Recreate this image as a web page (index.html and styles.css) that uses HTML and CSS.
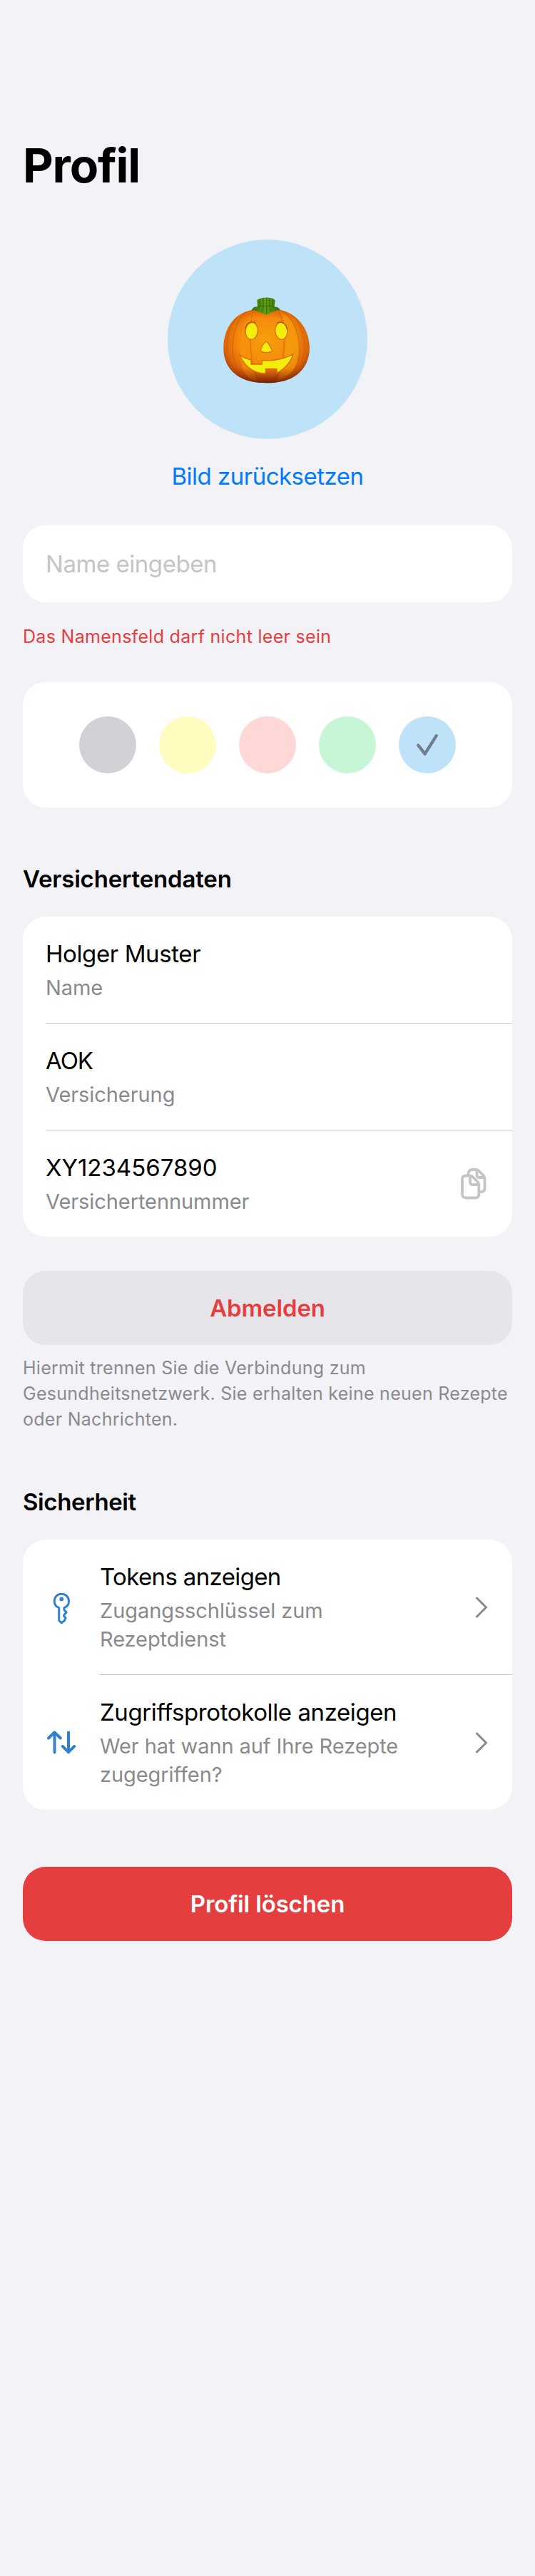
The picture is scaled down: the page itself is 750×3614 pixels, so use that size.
FILE: index.html
```html
<!DOCTYPE html>
<html lang="de">
<head>
<meta charset="utf-8">
<title>Profil</title>
<link rel="stylesheet" href="styles.css">
</head>
<body>
<main class="page">
  <h1 class="title">Profil</h1>

  <div class="avatar">
    <svg class="pumpkin" viewBox="0 0 510 480" aria-hidden="true">
      <defs>
        <radialGradient id="skin" cx="0.5" cy="0.42" r="0.6">
          <stop offset="0" stop-color="#f5a00c"/>
          <stop offset="0.55" stop-color="#f58a0c"/>
          <stop offset="0.82" stop-color="#dc650a"/>
          <stop offset="1" stop-color="#a43c0a"/>
        </radialGradient>
        <linearGradient id="base" x1="0" y1="0" x2="0" y2="1">
          <stop offset="0" stop-color="#d85a08" stop-opacity="0.75"/>
          <stop offset="0.14" stop-color="#e87008" stop-opacity="0"/>
          <stop offset="0.78" stop-color="#b04408" stop-opacity="0"/>
          <stop offset="1" stop-color="#6e1c08" stop-opacity="0.9"/>
        </linearGradient>
        <linearGradient id="stem" x1="0" y1="0" x2="1" y2="0">
          <stop offset="0" stop-color="#37700c"/>
          <stop offset="0.5" stop-color="#5f9c12"/>
          <stop offset="1" stop-color="#3a6e08"/>
        </linearGradient>
        <path id="body" d="M250 103C215 98 175 104 142 122C98 147 70 200 70 266C70 345 120 390 185 405C225 414 280 414 320 404C386 388 432 340 432 262C430 195 396 142 345 117C315 103 280 99 250 103Z"/>
      </defs>
      <use href="#body" fill="url(#skin)"/>
      <path d="M205 106C165 150 115 215 150 350C165 385 190 405 215 408C180 350 175 200 205 106Z" fill="#f8930c" opacity="0.6"/>
      <path d="M302 108C345 140 350 310 290 408C345 385 385 355 390 262C392 190 350 130 302 108Z" fill="#f5a00c" opacity="0.65"/>
      <g fill="none" stroke="#c85808" stroke-width="4" opacity="0.5">
        <path d="M160 120C105 165 88 290 140 368C155 388 175 400 190 404"/>
        <path d="M134 130C75 180 70 310 120 372"/>
        <path d="M318 110C375 145 410 255 375 345C364 370 345 390 325 402"/>
        <path d="M350 122C410 165 430 270 390 350"/>
        <path d="M194 110C180 160 172 330 218 408"/>
        <path d="M304 112C335 180 335 330 282 408"/>
      </g>
      <use href="#body" fill="url(#base)"/>
      <path d="M211 63C225 50 273 48 287 63L284 92C295 89 303 95 309 105C282 106 268 119 250 125C232 122 218 107 187 106C193 94 202 89 213 91Z" fill="url(#stem)"/>
      <g fill="none" stroke="#2c6008" stroke-width="3" opacity="0.7">
        <path d="M223 58V90L210 103M237 54V90L232 112M251 53V122M264 54V90L270 110M277 58V90L290 103"/>
        <path d="M213 91C235 86 265 86 284 92"/>
      </g>
      <g fill="#f4ee0c" stroke="#dc6b08" stroke-width="4" stroke-linejoin="round">
        <ellipse cx="188" cy="193" rx="26" ry="36" transform="rotate(5 188 193)"/>
        <ellipse cx="313" cy="193" rx="26" ry="36" transform="rotate(-5 313 193)"/>
        <path d="M250 237C258 243 270 262 275 277C264 286 236 286 225 277C230 260 240 242 250 237Z"/>
        <path d="M137 291C151 304 167 311 186 315V333H232V317C283 320 329 310 363 290C353 325 329 351 294 370V352H247V372C192 371 157 339 137 291Z"/>
      </g>
      <path d="M163 183C166 160 183 151 202 158M337 183C331 159 314 151 297 158" fill="none" stroke="#b44c08" stroke-width="4" stroke-linecap="round"/>
    </svg>
  </div>
  <a class="reset">Bild zurücksetzen</a>

  <input class="name-input" type="text" placeholder="Name eingeben" aria-label="Name">
  <p class="error">Das Namensfeld darf nicht leer sein</p>

  <div class="card colors">
    <span class="swatch grey"></span>
    <span class="swatch yellow"></span>
    <span class="swatch red"></span>
    <span class="swatch green"></span>
    <span class="swatch blue">
      <svg class="check" viewBox="0 0 32 32"><path d="M3.2 16.5L12.7 28.7L28.7 3.2"/></svg>
    </span>
  </div>

  <h2 class="heading">Versichertendaten</h2>
  <div class="card">
    <div class="row">
      <div class="label"><span class="primary">Holger Muster</span><span class="secondary">Name</span></div>
    </div>
    <div class="row">
      <div class="label"><span class="primary aok">AOK</span><span class="secondary">Versicherung</span></div>
    </div>
    <div class="row">
      <div class="label"><span class="primary number">XY1234567890</span><span class="secondary">Versichertennummer</span></div>
      <svg class="copy" viewBox="0 0 36 44">
        <path d="M10.5 10V8Q10.5 2 16.5 2H21.5Q23.5 2 25 3.5L32 10.5Q33.5 12 33.5 14V28Q33.5 33 28.5 33H26"/>
        <path d="M22.5 3V9.5Q22.5 13 26 13H33"/>
        <path d="M7 10.5H13Q15 10.5 16.5 12L24 19.5Q25.3 21 25.3 23V36.5Q25.3 41.5 20.3 41.5H7Q2 41.5 2 36.5V15.5Q2 10.5 7 10.5Z"/>
        <path d="M13 11V19.5Q13 23 16.5 23H25"/>
      </svg>
    </div>
  </div>

  <button class="button logout">Abmelden</button>
  <p class="caption">Hiermit trennen Sie die Verbindung zum<br>Gesundheitsnetzwerk. Sie erhalten keine neuen Rezepte<br>oder Nachrichten.</p>

  <h2 class="heading security">Sicherheit</h2>
  <div class="card">
    <div class="nav-row">
      <svg class="icon" viewBox="0 -5 40 44">
        <circle class="dot" cx="20.3" cy="5.4" r="2.9"/>
        <path d="M16.7 17.7C12.3 16.2 10.2 12.3 10.2 8.300C10.2 2.3 14.5 -1.7 20.3 -1.7S30.5 2.3 30.5 8.3C30.5 12.3 28.3 16.2 23.9 17.7V20.5L27.2 24L23.7 27.8V29.5L26 32L24.5 35.5L20.3 38.8L16.7 35.5Z"/>
      </svg>
      <div class="nav-body">
        <div class="label"><span class="primary tokens">Tokens anzeigen</span><span class="secondary">Zugangsschlüssel zum<br>Rezeptdienst</span></div>
        <svg class="chevron" viewBox="0 0 16 30"><path d="M1.5 2L14.5 15L1.5 28"/></svg>
      </div>
    </div>
    <div class="nav-row">
      <svg class="icon" viewBox="0 0 40 44">
        <path class="arrow" d="M10.5 36.500V8.500M2 16.500L10.500 8.300L18.800 16.500M30 8.500V36.500M21.700 28L30 36.200L38.300 28"/>
      </svg>
      <div class="nav-body">
        <div class="label"><span class="primary">Zugriffsprotokolle anzeigen</span><span class="secondary">Wer hat wann auf Ihre Rezepte<br>zugegriffen?</span></div>
        <svg class="chevron" viewBox="0 0 16 30"><path d="M1.5 2L14.5 15L1.5 28"/></svg>
      </div>
    </div>
  </div>

  <button class="button delete">Profil löschen</button>
</main>
</body>
</html>
```

FILE: styles.css
```css
* {
  box-sizing: border-box;
}

body {
  margin: 0;
  background: #f2f2f7;
  color: #000;
  font-family: Inter, "Liberation Sans", sans-serif;
}

.page {
  display: flex;
  flex-direction: column;
  min-height: 3614px;
  padding: 192px 32px 0;
}

.title {
  margin: 0;
  font-size: 66px;
  line-height: 80px;
  font-weight: 700;
  letter-spacing: -1.2px;
}

.avatar {
  display: flex;
  align-items: center;
  justify-content: center;
  align-self: center;
  width: 280px;
  height: 280px;
  margin-top: 64px;
  padding-top: 8px;
  border-radius: 50%;
  background: #bee3f8;
}

.pumpkin {
  width: 170px;
  height: 160px;
}

.reset {
  align-self: center;
  margin-top: 32px;
  color: #007aff;
  font-size: 33px;
  line-height: 40px;
  letter-spacing: -0.5px;
}

.name-input {
  width: 100%;
  height: 108px;
  margin-top: 49px;
  padding: 0 32px;
  border: 0;
  border-radius: 32px;
  background: #fff;
  font-family: inherit;
  font-size: 33px;
  letter-spacing: -0.46px;
}

.name-input::placeholder {
  color: #c5c5c6;
  opacity: 1;
}

.error {
  margin: 32px 0 48px;
  color: #e53e3e;
  font-size: 25px;
  line-height: 32px;
  letter-spacing: 0.3px;
}

.card {
  overflow: hidden;
  border-radius: 32px;
  background: #fff;
}

.colors {
  display: flex;
  align-items: center;
  justify-content: center;
  gap: 32px;
  height: 176px;
}

.swatch {
  display: flex;
  align-items: center;
  justify-content: center;
  width: 80px;
  height: 80px;
  border-radius: 50%;
}

.grey { background: #d1d1d6; }
.yellow { background: #fefcbf; }
.red { background: #fed7d7; }
.green { background: #c6f6d5; }
.blue { background: #bee3f8; }

.check {
  width: 32px;
  height: 32px;
  fill: none;
  stroke: #727f8b;
  stroke-width: 4.4;
  stroke-linecap: round;
  stroke-linejoin: round;
}

.heading {
  margin: 80px 0 33px;
  font-size: 33px;
  line-height: 40px;
  font-weight: 600;
  letter-spacing: -0.18px;
}

.security {
  margin-top: 78px;
  letter-spacing: -0.38px;
}

.row {
  display: flex;
  align-items: center;
  justify-content: space-between;
  height: 149px;
  margin-left: 32px;
  padding-right: 36px;
}

.row + .row {
  height: 150px;
  border-top: 1px solid #c6c6c8;
}

.label {
  display: flex;
  flex-direction: column;
  gap: 10px;
  padding-top: 1px;
}

.primary {
  font-size: 33px;
  line-height: 40px;
  letter-spacing: -0.4px;
}

.aok { letter-spacing: -1px; }
.number { letter-spacing: 0; }
.tokens { letter-spacing: -0.64px; }

.secondary {
  color: #8a8a8e;
  font-size: 29px;
  line-height: 36px;
  letter-spacing: -0.08px;
}

.copy {
  width: 36px;
  height: 44px;
  fill: none;
  stroke: #c5c5c7;
  stroke-width: 3.8;
  stroke-linejoin: round;
}

.button {
  flex: none;
  height: 104px;
  padding: 0;
  border: 0;
  border-radius: 32px;
  font-family: inherit;
  font-size: 33px;
  font-weight: 600;
  letter-spacing: -0.14px;
}

.logout {
  margin-top: 48px;
  background: #e5e5ea;
  color: #e53e3e;
}

.caption {
  margin: 14px 0 0;
  color: #8a8a8e;
  font-size: 25px;
  line-height: 36px;
  letter-spacing: 0.27px;
  white-space: nowrap;
}

.nav-row {
  display: flex;
  align-items: center;
  height: 189px;
  padding-left: 34px;
}

.icon {
  flex: none;
  width: 40px;
  height: 44px;
  overflow: visible;
  fill: none;
  stroke: #3182ce;
  stroke-width: 3;
  stroke-linejoin: round;
}

.dot {
  fill: #3182ce;
  stroke: none;
}

.arrow {
  stroke-width: 4;
  stroke-linecap: round;
}

.nav-body {
  display: flex;
  align-items: center;
  justify-content: space-between;
  flex: 1;
  height: 100%;
  margin-left: 34px;
  padding-right: 35px;
}

.nav-body .label {
  gap: 8px;
  padding-top: 3px;
}

.nav-body .secondary {
  line-height: 40px;
}

.nav-row + .nav-row {
  height: 190px;
}

.nav-row + .nav-row .nav-body {
  border-top: 1px solid #c6c6c8;
}

.chevron {
  width: 16px;
  height: 30px;
  fill: none;
  stroke: #8a8a8e;
  stroke-width: 3;
  stroke-linecap: round;
  stroke-linejoin: round;
}

.delete {
  margin-top: 80px;
  background: #e53e3e;
  color: #fff;
}
```
